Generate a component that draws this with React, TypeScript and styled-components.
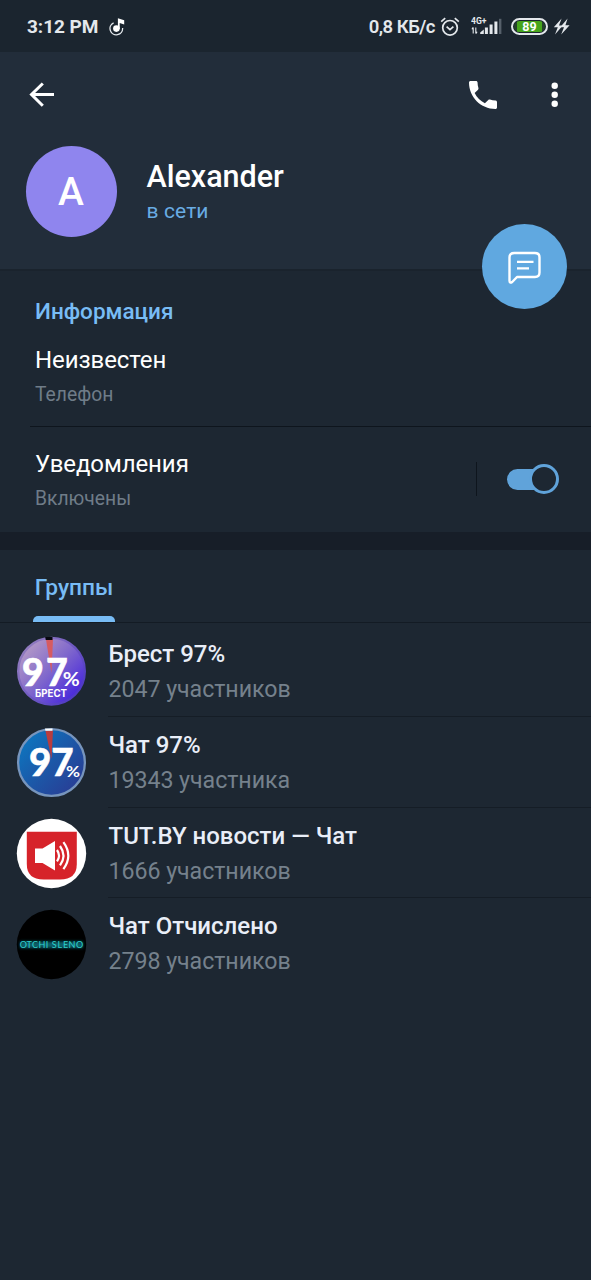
import React from 'react';
import styled, { createGlobalStyle } from 'styled-components';

const GlobalStyle = createGlobalStyle`
  * { box-sizing: border-box; }
  html, body { margin: 0; background: #1d2733; }
  body { font-family: Roboto, "Noto Sans", sans-serif; color: #fff; }
  svg { display: block; flex: none; }
`;

const Screen = styled.main`
  width: 591px;
  height: 1280px;
  overflow: hidden;
  background: #1d2732;
  display: flex;
  flex-direction: column;
`;

const StatusBar = styled.div`
  height: 52px;
  flex: none;
  padding: 1px 21px 0 27px;
  background: #1b252f;
  display: flex;
  align-items: center;
  color: #e4e8ec;
  font-size: 19px;
  font-weight: 700;
  white-space: nowrap;
`;

const Clock = styled.span`
  width: 82px;
  letter-spacing: -0.05px;
`;

const StatusRight = styled.div`
  margin-left: auto;
  display: flex;
  align-items: center;
`;

const Speed = styled.span`
  font-size: 18.5px;
  font-weight: 600;
  letter-spacing: -0.5px;
  margin-right: 5px;
`;

const Signal = styled.div`
  margin-left: 11px;
`;

const Battery = styled.div`
  width: 37px;
  height: 17px;
  margin: 0 5px 0 9px;
  border: 2px solid #e4e8ec;
  border-radius: 9px;
  padding: 1px;
`;

const BatteryLevel = styled.div`
  height: 11px;
  border-radius: 6px;
  background: linear-gradient(90deg, #24402a 3px, #46a41c 3px 28px, #24402a 28px);
  color: #fff;
  font-size: 12.5px;
  line-height: 11.5px;
  font-weight: 700;
  text-align: center;
`;

const Header = styled.header`
  position: relative;
  height: 217px;
  flex: none;
  background: #222d3a;
`;

const Toolbar = styled.div`
  height: 85px;
  padding: 0 27px 0 26px;
  display: flex;
  align-items: center;
`;

const ToolbarActions = styled.div`
  margin-left: auto;
  display: flex;
  align-items: center;
  gap: 47px;
`;

const Profile = styled.div`
  display: flex;
  padding: 9px 0 0 25.5px;
`;

const ProfileAvatar = styled.div`
  width: 91px;
  height: 91px;
  border-radius: 50%;
  background: #8f85ee;
  display: grid;
  place-items: center;
  font-size: 39px;
  font-weight: 500;
`;

const ProfileText = styled.div`
  margin-left: 30px;
  padding-top: 13px;
`;

const Name = styled.div`
  font-size: 30.5px;
  line-height: 36px;
  font-weight: 500;
`;

const Presence = styled.div`
  font-size: 21px;
  line-height: 28px;
  margin-top: 2px;
  color: #69ace4;
  letter-spacing: 0.1px;
`;

const MessageButton = styled.button`
  position: absolute;
  right: 24px;
  top: 172px;
  width: 85px;
  height: 85px;
  padding: 0;
  border: 0;
  border-radius: 50%;
  background: #60a8e0;
  display: grid;
  place-items: center;
`;

const Info = styled.section`
  height: 263px;
  flex: none;
  border-top: 2px solid #1a232d;
`;

const SectionTitle = styled.h2`
  margin: 0;
  padding: 25px 0 0 35px;
  font-size: 22.5px;
  line-height: 30px;
  font-weight: 500;
  color: #78bcf5;
`;

const InfoRow = styled.div<{ $top: number; $height: number; $line?: boolean }>`
  height: ${p => p.$height}px;
  margin-left: 30px;
  padding: ${p => p.$top}px 32px 0 5px;
  border-bottom: ${p => (p.$line ? '1px solid #0e151d' : '0')};
  display: flex;
`;

const Primary = styled.div`
  font-size: 24px;
  line-height: 30px;
  letter-spacing: -0.08px;
`;

const Secondary = styled.div`
  margin-top: 6px;
  font-size: 19.3px;
  line-height: 28px;
  color: #6f7c88;
`;

const SwitchArea = styled.div`
  margin-left: auto;
  margin-top: 13px;
  height: 34px;
  width: 83px;
  border-left: 1px solid #0e151d;
  display: flex;
  align-items: center;
  justify-content: flex-end;
`;

const Track = styled.div`
  width: 52px;
  height: 21px;
  border-radius: 11px;
  background: linear-gradient(90deg, #60a3da 40px, transparent 40px);
  display: flex;
  align-items: center;
  justify-content: flex-end;
`;

const Thumb = styled.div`
  width: 30px;
  height: 30px;
  flex: none;
  border-radius: 50%;
  border: 3px solid #60a3da;
  background: #1d2732;
`;

const Gap = styled.div`
  height: 18px;
  flex: none;
  background: #171e28;
`;

const Tabs = styled.nav`
  height: 73px;
  flex: none;
  padding-left: 33px;
  border-bottom: 1px solid #131b24;
  display: flex;
`;

const Tab = styled.div`
  width: 82px;
  display: flex;
  flex-direction: column;
  justify-content: space-between;
  padding-top: 23px;
  font-size: 22.7px;
  line-height: 30px;
  font-weight: 500;
  text-align: center;
  color: #78bcf5;

  &::after {
    content: '';
    height: 6px;
    border-radius: 5px 5px 0 0;
    background: #78bcf5;
  }
`;

const List = styled.section`
  padding-top: 3px;
`;

const GroupRow = styled.div`
  height: 90.8px;
  flex: none;
  display: flex;
  padding-left: 16px;
`;

const GroupPic = styled.div`
  padding-top: 10.2px;
  width: 92px;
`;

const GroupText = styled.div<{ $last?: boolean }>`
  flex: 1;
  padding: 13px 0 0 0.5px;
  border-bottom: 1px solid ${p => (p.$last ? 'transparent' : '#151d26')};
`;

const GroupName = styled.div`
  font-size: 24px;
  line-height: 30px;
  font-weight: 500;
  color: #e9eef8;
`;

const Members = styled.div`
  margin-top: 5px;
  font-size: 23.2px;
  line-height: 30px;
  letter-spacing: -0.05px;
  color: #75818c;
`;

const MusicIcon = () => (
  <svg width="18" height="20" viewBox="0 0 18 20" fill="none" stroke="#e8ecf0">
    <path d="M4.6 5.8A6.3 6.3 0 1 0 13.6 11" strokeWidth="1.3" />
    <circle cx="7.4" cy="11.6" r="3.3" fill="#fff" stroke="none" />
    <path d="M8.9 1.2L15.2 3.2V7.4L10.7 6V12H8.9Z" fill="#fff" stroke="none" />
  </svg>
);

const AlarmIcon = () => (
  <svg width="20" height="20" viewBox="0 0 20 20" fill="none" stroke="#e4e8ec" strokeWidth="1.7">
    <circle cx="10" cy="10.8" r="7.3" />
    <path d="M1.2 4.6L5.2 1.2M18.8 4.6L14.8 1.2M6.6 9.6L10 12.6L13.4 9.6" />
  </svg>
);

const SignalIcon = () => (
  <svg width="31" height="20" viewBox="0 0 31 20" fill="#e4e8ec">
    <text x="0" y="7.4" fontSize="8.6" fontWeight="700" fontFamily="Roboto, sans-serif">4G+</text>
    <path d="M2.2 10.4V16.6M4.8 10.4V16.6M0.9 12.2L2.2 10.4M6.1 14.8L4.8 16.6" fill="none" stroke="#e4e8ec" strokeWidth="1.1" />
    <path d="M9.2 17V15.4L12.8 12.4V17ZM13.9 10.4H16.9V17H13.9ZM18.6 7.6H21.6V17H18.6ZM23.4 4.6H26.4V17H23.4Z" />
    <path d="M28 1.8H30.4V17H28Z" fill="#56606a" />
  </svg>
);

const BoltIcon = () => (
  <svg width="17" height="17" viewBox="0 0 17 17" fill="#e4e8ec">
    <path d="M8.6 0.4L0.8 9.2H4.8L2 16.4L9.8 7.4H6Z" />
    <path d="M14.6 0.4L7.2 9.2H11L8.2 16.4L16.6 7.2H12.4Z" />
  </svg>
);

const BackIcon = () => (
  <svg width="30" height="28" viewBox="0 0 30 28" fill="none" stroke="#fff" strokeWidth="3">
    <path d="M28 13.5H6M16.8 2.5L5.5 13.5L16.8 24.7" />
  </svg>
);

const PhoneIcon = () => (
  <svg width="28" height="28" viewBox="3 3 18 18" fill="#fff">
    <path d="M6.62 10.79c1.44 2.83 3.76 5.14 6.59 6.59l2.2-2.2c.27-.27.67-.36 1.02-.24 1.12.37 2.33.57 3.57.57.55 0 1 .45 1 1V20c0 .55-.45 1-1 1C10.61 21 3 13.39 3 4c0-.55.45-1 1-1h3.5c.55 0 1 .45 1 1 0 1.25.2 2.45.57 3.57.11.35.03.74-.25 1.02z" />
  </svg>
);

const MoreIcon = () => (
  <svg width="20" height="28" viewBox="0 0 20 28" fill="#fff">
    <circle cx="10.7" cy="4.8" r="3.2" />
    <circle cx="10.7" cy="13.8" r="3.2" />
    <circle cx="10.7" cy="22.8" r="3.2" />
  </svg>
);

const MessageIcon = () => (
  <svg width="36" height="36" viewBox="0 0 36 36" fill="none" stroke="#fff" strokeWidth="2.4" strokeLinejoin="round">
    <path d="M7.2 4H28Q32.5 4 32.5 8.5V23.5Q32.5 28 28 28H10L5.2 33Q2.5 34.8 2.5 31.5V8.5Q2.5 4 7.2 4Z" />
    <path d="M10 12.9H26.5M10 19.4H22" strokeWidth="2.3" />
  </svg>
);

const BrestPic = () => (
  <svg width="71" height="71" viewBox="0 0 71 71">
    <defs>
      <linearGradient id="brest" x1="0.1" y1="0.1" x2="0.9" y2="0.85">
        <stop offset="0" stopColor="#b79cc6" />
        <stop offset="0.5" stopColor="#8068cc" />
        <stop offset="1" stopColor="#4626dc" />
      </linearGradient>
      <linearGradient id="brestRing" x1="0" y1="0" x2="1" y2="0.8">
        <stop offset="0" stopColor="#9b86bd" />
        <stop offset="1" stopColor="#4b35c6" />
      </linearGradient>
    </defs>
    <circle cx="35.5" cy="35.2" r="33.3" fill="url(#brest)" stroke="url(#brestRing)" strokeWidth="2.4" />
    <path d="M30 3.5L35.5 37L37 3.2Z" fill="#d65b61" />
    <path d="M29.2 1H36.5V4H29.7Z" fill="#080810" />
    <g fill="#fff" fontFamily="Lato, sans-serif" fontWeight="900">
      <text x="6 30" y="49.5" fontSize="37.5" stroke="#fff" strokeWidth="0.6">97</text>
      <text x="46.8" y="49.5" fontSize="18" textLength="17" lengthAdjust="spacingAndGlyphs" fontWeight="700">%</text>
      <text x="19" y="60.8" fontSize="9.8" textLength="32" lengthAdjust="spacingAndGlyphs" fontFamily="Inter, sans-serif" fontWeight="700">БРЕСТ</text>
    </g>
  </svg>
);

const ChatPic = () => (
  <svg width="71" height="71" viewBox="0 0 71 71">
    <defs>
      <linearGradient id="chat" x1="0.1" y1="0.1" x2="0.9" y2="0.85">
        <stop offset="0" stopColor="#0c76c0" />
        <stop offset="0.55" stopColor="#1d56a6" />
        <stop offset="1" stopColor="#283e96" />
      </linearGradient>
    </defs>
    <circle cx="35.5" cy="35.5" r="33.4" fill="url(#chat)" stroke="#7795bd" strokeWidth="2.3" />
    <path d="M29.5 4L35.5 32L37 3.4Z" fill="#b83d3f" />
    <path d="M29 1.5H36.5V3.8H29.4Z" fill="#fff" />
    <g fill="#fff" fontFamily="Lato, sans-serif" fontWeight="900">
      <text x="13 35.2" y="48.6" fontSize="38.5" stroke="#fff" strokeWidth="0.5">97</text>
      <text x="50" y="50" fontSize="15.5" textLength="14" lengthAdjust="spacingAndGlyphs" fontWeight="700">%</text>
    </g>
  </svg>
);

const TutPic = () => (
  <svg width="71" height="71" viewBox="0 0 71 71">
    <circle cx="35.5" cy="35.5" r="34.7" fill="#fff" />
    <path d="M10.8 13.7H60.8V46Q60.8 61.5 44 61.5H27.6Q10.8 61.5 10.8 46Z" fill="#d6232a" />
    <path d="M19 30.5H26.5L39 23V52.5L26.5 45H19Z" fill="#fff" />
    <g fill="none" stroke="#fff" strokeWidth="2.2">
      <path d="M41 32Q45 37.7 41 43.4" />
      <path d="M44 28Q51 37.7 44 47.4" />
      <path d="M47.4 24.2Q57.2 37.7 47.4 51.2" />
    </g>
  </svg>
);

const OtchislenoPic = () => (
  <svg width="71" height="71" viewBox="0 0 71 71">
    <defs>
      <filter id="neon" x="-0.2" y="-1" width="1.4" height="3">
        <feGaussianBlur stdDeviation="1.7" />
      </filter>
    </defs>
    <circle cx="35.5" cy="35.5" r="34.7" fill="#000" />
    <rect x="4" y="32.5" width="63" height="6.5" fill="#07606a" filter="url(#neon)" />
    <text x="3.8 10.6 16 22.6 29.8 35.8 41.6 47 52.6 60" y="39" fontSize="9" fontFamily="Lato, sans-serif" fontWeight="400" fill="#2ed0cc">OTCHISLENO</text>
  </svg>
);

const groups = [
  { name: 'Брест 97%', members: '2047 участников', Pic: BrestPic },
  { name: 'Чат 97%', members: '19343 участника', Pic: ChatPic },
  { name: 'TUT.BY новости — Чат', members: '1666 участников', Pic: TutPic },
  { name: 'Чат Отчислено', members: '2798 участников', Pic: OtchislenoPic },
];

export default function App() {
  return (
    <>
      <GlobalStyle />
      <Screen>
        <StatusBar>
          <Clock>3:12 PM</Clock>
          <MusicIcon />
          <StatusRight>
            <Speed>0,8 КБ/с</Speed>
            <AlarmIcon />
            <Signal>
              <SignalIcon />
            </Signal>
            <Battery>
              <BatteryLevel>89</BatteryLevel>
            </Battery>
            <BoltIcon />
          </StatusRight>
        </StatusBar>
        <Header>
          <Toolbar>
            <BackIcon />
            <ToolbarActions>
              <PhoneIcon />
              <MoreIcon />
            </ToolbarActions>
          </Toolbar>
          <Profile>
            <ProfileAvatar>A</ProfileAvatar>
            <ProfileText>
              <Name>Alexander</Name>
              <Presence>в сети</Presence>
            </ProfileText>
          </Profile>
          <MessageButton aria-label="Написать">
            <MessageIcon />
          </MessageButton>
        </Header>
        <Info>
          <SectionTitle>Информация</SectionTitle>
          <InfoRow $top={19} $height={101} $line>
            <div>
              <Primary>Неизвестен</Primary>
              <Secondary>Телефон</Secondary>
            </div>
          </InfoRow>
          <InfoRow $top={22} $height={105}>
            <div>
              <Primary>Уведомления</Primary>
              <Secondary>Включены</Secondary>
            </div>
            <SwitchArea>
              <Track>
                <Thumb />
              </Track>
            </SwitchArea>
          </InfoRow>
        </Info>
        <Gap />
        <Tabs>
          <Tab>Группы</Tab>
        </Tabs>
        <List>
          {groups.map(({ name, members, Pic }, i) => (
            <GroupRow key={name}>
              <GroupPic>
                <Pic />
              </GroupPic>
              <GroupText $last={i === groups.length - 1}>
                <GroupName>{name}</GroupName>
                <Members>{members}</Members>
              </GroupText>
            </GroupRow>
          ))}
        </List>
      </Screen>
    </>
  );
}
